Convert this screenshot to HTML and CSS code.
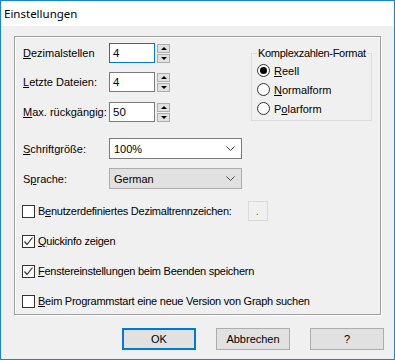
FILE: index.html
```html
<!DOCTYPE html>
<html lang="de">
<head>
    <meta charset="UTF-8">
    <title>Einstellungen</title>
    <link rel="stylesheet" href="styles.css">
</head>
<body>
    <div class="window">
        <div class="titlebar">Einstellungen</div>
        <div class="client">
            <div class="panel">
                <div class="top">
                    <div class="fields">
                        <div class="field">
                            <label class="lbl"><u>D</u>ezimalstellen</label>
                            <div class="edit focus">4</div>
                            <div class="spin"><span class="up"></span><span class="down"></span></div>
                        </div>
                        <div class="field">
                            <label class="lbl"><u>L</u>etzte Dateien:</label>
                            <div class="edit">4</div>
                            <div class="spin"><span class="up"></span><span class="down"></span></div>
                        </div>
                        <div class="field">
                            <label class="lbl"><u>M</u>ax. rückgängig:</label>
                            <div class="edit">50</div>
                            <div class="spin"><span class="up"></span><span class="down"></span></div>
                        </div>
                    </div>
                    <fieldset class="group">
                        <legend>Komplexzahlen-Format</legend>
                        <div class="radio"><span class="dot on"></span><span><u>R</u>eell</span></div>
                        <div class="radio"><span class="dot"></span><span><u>N</u>ormalform</span></div>
                        <div class="radio"><span class="dot"></span><span>P<u>o</u>larform</span></div>
                    </fieldset>
                </div>

                <div class="field combo-row">
                    <label class="lbl"><u>S</u>chriftgröße:</label>
                    <div class="combo">100%
                        <svg class="chev" width="9" height="5" viewBox="0 0 9 5"><polyline points="0.5,0.5 4.5,4.5 8.5,0.5" fill="none" stroke="#444" stroke-width="1"/></svg>
                    </div>
                </div>
                <div class="field combo-row">
                    <label class="lbl">S<u>p</u>rache:</label>
                    <div class="combo list">German
                        <svg class="chev" width="9" height="5" viewBox="0 0 9 5"><polyline points="0.5,0.5 4.5,4.5 8.5,0.5" fill="none" stroke="#444" stroke-width="1"/></svg>
                    </div>
                </div>

                <div class="check first">
                    <span class="box"></span>
                    <span>B<u>e</u>nutzerdefiniertes Dezimaltrennzeichen:</span>
                    <span class="sep">.</span>
                </div>
                <div class="check">
                    <span class="box"><svg width="11" height="11" viewBox="0 0 11 11"><polyline points="1.5,5.5 4,8.5 9.5,1.5" fill="none" stroke="#333" stroke-width="1.2"/></svg></span>
                    <span><u>Q</u>uickinfo zeigen</span>
                </div>
                <div class="check">
                    <span class="box"><svg width="11" height="11" viewBox="0 0 11 11"><polyline points="1.5,5.5 4,8.5 9.5,1.5" fill="none" stroke="#333" stroke-width="1.2"/></svg></span>
                    <span><u>F</u>enstereinstellungen beim Beenden speichern</span>
                </div>
                <div class="check">
                    <span class="box"></span>
                    <span><u>B</u>eim Programmstart eine neue Version von Graph suchen</span>
                </div>
            </div>
            <div class="buttons">
                <button class="btn default">OK</button>
                <button class="btn">Abbrechen</button>
                <button class="btn">?</button>
            </div>
        </div>
    </div>
</body>
</html>
```

FILE: styles.css
```css
body {
    margin: 0;
    font-family: "Liberation Sans", Arial, sans-serif;
    font-size: 11px;
    color: #000;
}
.window {
    width: 395px;
    height: 360px;
    box-sizing: border-box;
    border: 1px solid #1883d7;
    background: #f0f0f0;
    display: flex;
    flex-direction: column;
}
.titlebar {
    height: 25px;
    background: #fff;
    font-family: "Noto Sans", "Open Sans", sans-serif;
    font-size: 11.5px;
    line-height: 25px;
    padding-left: 3px;
}
.client {
    flex: 1;
    padding: 10px 13px 0 13px;
}
.panel {
    height: 279px;
    box-sizing: border-box;
    border: 1px solid #a0a0a0;
    box-shadow: inset 1px 1px #fff, 1px 1px #fff;
    padding: 6px 7px 0 7px;
}
.top {
    display: flex;
    justify-content: space-between;
}
.field {
    display: flex;
    align-items: center;
    height: 20px;
    margin-bottom: 9px;
}
.fields .field:nth-child(2) {
    margin-bottom: 10px;
}
.lbl {
    width: 86px;
    padding-left: 1px;
}
.edit {
    width: 46px;
    height: 20px;
    box-sizing: border-box;
    border: 1px solid #7a7a7a;
    background: #fff;
    padding: 3px 3px;
    font-size: 11.5px;
}
.edit.focus {
    border-color: #0078d7;
}
.spin {
    display: flex;
    flex-direction: column;
    gap: 1px;
    margin-left: 2px;
}
.spin span {
    width: 13px;
    height: 9px;
    box-sizing: border-box;
    border: 1px solid #adadad;
    background: #e1e1e1;
    display: flex;
    align-items: center;
    justify-content: center;
}
.spin .up::after {
    content: "";
    border-left: 3px solid transparent;
    border-right: 3px solid transparent;
    border-bottom: 3px solid #000;
}
.spin .down::after {
    content: "";
    border-left: 3px solid transparent;
    border-right: 3px solid transparent;
    border-top: 3px solid #000;
}
.group {
    margin: 4px 1px 0 0;
    padding: 1px 0 2px 5px;
    width: 121px;
    box-sizing: border-box;
    align-self: flex-start;
    border: 1px solid #dcdcdc;
}
.group legend {
    white-space: nowrap;
    line-height: 13px;
    letter-spacing: -0.3px;
    padding: 0 1px;
    margin-left: 0;
}
.radio {
    display: flex;
    align-items: center;
    height: 19px;
}
.dot {
    width: 13px;
    height: 13px;
    box-sizing: border-box;
    border: 1px solid #333;
    border-radius: 50%;
    background: #fff;
    margin-right: 4px;
    display: flex;
    align-items: center;
    justify-content: center;
}
.dot.on::after {
    content: "";
    width: 7px;
    height: 7px;
    border-radius: 50%;
    background: #000;
}
.combo-row {
    height: 21px;
}
.top + .combo-row {
    margin-top: 7px;
}
.combo {
    width: 133px;
    height: 21px;
    box-sizing: border-box;
    border: 1px solid #7a7a7a;
    background: #fff;
    padding: 0 4px;
    display: flex;
    align-items: center;
    justify-content: space-between;
}
.combo.list {
    background: #e1e1e1;
    border-color: #adadad;
}
.chev {
    margin-right: 2px;
}
.check {
    display: flex;
    align-items: center;
    height: 20px;
    letter-spacing: -0.25px;
}
.check.first {
    margin-top: 12px;
}
.check + .check {
    margin-top: 10px;
}
.box {
    width: 13px;
    height: 13px;
    box-sizing: border-box;
    border: 1px solid #333;
    background: #fff;
    margin: 0 3px 0 0;
    display: flex;
    align-items: center;
    justify-content: center;
}
.sep {
    width: 20px;
    height: 20px;
    box-sizing: border-box;
    border: 1px solid #d9d9d9;
    margin-left: 16px;
    color: #6d6d6d;
    padding: 3px 0 0 7px;
}
.buttons {
    display: flex;
    justify-content: flex-end;
    gap: 20px;
    margin-top: 13px;
    margin-right: -3px;
}
.btn {
    width: 74px;
    height: 22px;
    box-sizing: border-box;
    border: 1px solid #adadad;
    background: #e1e1e1;
    font-family: "Liberation Sans", Arial, sans-serif;
    font-size: 11px;
    color: #000;
    padding: 0;
}
.btn.default {
    border: 2px solid #0078d7;
}
```
